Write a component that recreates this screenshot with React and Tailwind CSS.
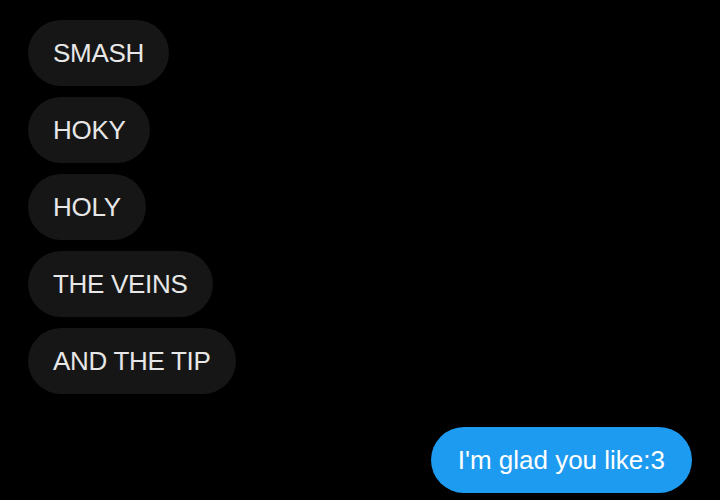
export default function App() {
  const lines = ['SMASH', 'HOKY', 'HOLY', 'THE VEINS', 'AND THE TIP'];

  return (
    <div className="w-[720px] h-[500px] bg-black overflow-hidden px-[28px] pt-[20px] font-['Liberation_Sans',_Arial,_sans-serif]">
      <div className="flex flex-col items-start gap-[11px]">
        {lines.map((t) => (
          <div
            key={t}
            className="h-[66px] flex items-center rounded-full bg-[#161616] px-[25px] text-[26px] tracking-[-0.3px] text-[#e7e7e7] whitespace-nowrap"
          >
            {t}
          </div>
        ))}
      </div>
      <div className="flex justify-end mt-[33px]">
        <div className="h-[66px] flex items-center rounded-full bg-[#1d9bf0] px-[27px] text-[26px] text-white whitespace-nowrap">
          I'm glad you like:3
        </div>
      </div>
    </div>
  );
}
